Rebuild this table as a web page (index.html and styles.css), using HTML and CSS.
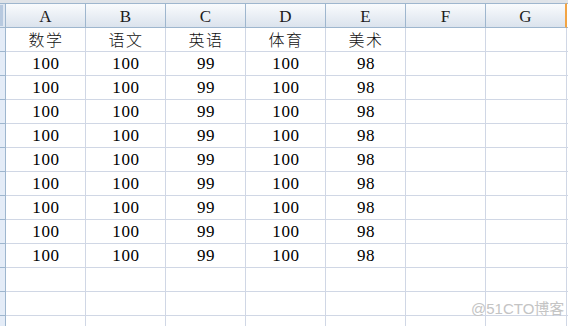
FILE: index.html
```html
<!DOCTYPE html>
<html>
<head>
<meta charset="utf-8">
<link rel="stylesheet" href="styles.css">
</head>
<body>
<div class="sheet">
  <div class="topbar"></div>
  <div class="grid">
    <div class="corner"><span class="corner-mark"></span></div>
    <div class="h">A</div><div class="h">B</div><div class="h">C</div><div class="h">D</div><div class="h">E</div><div class="h">F</div><div class="h last">G</div><div class="h rest"></div>

    <div class="rh"></div><div class="c zh">数学</div><div class="c zh">语文</div><div class="c zh">英语</div><div class="c zh">体育</div><div class="c zh">美术</div><div class="c"></div><div class="c"></div><div class="c rest"></div>

    <div class="rh"></div><div class="c">100</div><div class="c">100</div><div class="c">99</div><div class="c">100</div><div class="c">98</div><div class="c"></div><div class="c"></div><div class="c rest"></div>
    <div class="rh"></div><div class="c">100</div><div class="c">100</div><div class="c">99</div><div class="c">100</div><div class="c">98</div><div class="c"></div><div class="c"></div><div class="c rest"></div>
    <div class="rh"></div><div class="c">100</div><div class="c">100</div><div class="c">99</div><div class="c">100</div><div class="c">98</div><div class="c"></div><div class="c"></div><div class="c rest"></div>
    <div class="rh"></div><div class="c">100</div><div class="c">100</div><div class="c">99</div><div class="c">100</div><div class="c">98</div><div class="c"></div><div class="c"></div><div class="c rest"></div>
    <div class="rh"></div><div class="c">100</div><div class="c">100</div><div class="c">99</div><div class="c">100</div><div class="c">98</div><div class="c"></div><div class="c"></div><div class="c rest"></div>
    <div class="rh"></div><div class="c">100</div><div class="c">100</div><div class="c">99</div><div class="c">100</div><div class="c">98</div><div class="c"></div><div class="c"></div><div class="c rest"></div>
    <div class="rh"></div><div class="c">100</div><div class="c">100</div><div class="c">99</div><div class="c">100</div><div class="c">98</div><div class="c"></div><div class="c"></div><div class="c rest"></div>
    <div class="rh"></div><div class="c">100</div><div class="c">100</div><div class="c">99</div><div class="c">100</div><div class="c">98</div><div class="c"></div><div class="c"></div><div class="c rest"></div>
    <div class="rh"></div><div class="c">100</div><div class="c">100</div><div class="c">99</div><div class="c">100</div><div class="c">98</div><div class="c"></div><div class="c"></div><div class="c rest"></div>

    <div class="rh"></div><div class="c"></div><div class="c"></div><div class="c"></div><div class="c"></div><div class="c"></div><div class="c"></div><div class="c"></div><div class="c rest"></div>
    <div class="rh"></div><div class="c"></div><div class="c"></div><div class="c"></div><div class="c"></div><div class="c"></div><div class="c"></div><div class="c"></div><div class="c rest"></div>
    <div class="rh"></div><div class="c"></div><div class="c"></div><div class="c"></div><div class="c"></div><div class="c"></div><div class="c"></div><div class="c"></div><div class="c rest"></div>
  </div>
  <div class="watermark">@51CTO博客</div>
</div>
</body>
</html>
```
FILE: styles.css
```css
html, body {
  margin: 0;
  padding: 0;
  background: #ffffff;
}
.sheet {
  position: relative;
  width: 568px;
  height: 326px;
  overflow: hidden;
  font-family: "Liberation Serif", serif;
  color: #000;
}
.topbar {
  height: 3px;
  background: #dfe3e8;
}
.grid {
  display: grid;
  grid-template-columns: 6px repeat(6, 80px) 81px 1fr;
  grid-template-rows: 25px repeat(13, 24px);
}
.grid > div {
  box-sizing: border-box;
}
.corner {
  border-top: 1px solid #9eb6ce;
  border-right: 1px solid #9eb6ce;
  border-bottom: 1px solid #9eb6ce;
  background: #dfe7f1;
  padding: 1px 0 1px 0;
}
.corner-mark {
  display: block;
  width: 3px;
  height: 100%;
  background: #b7c9df;
}
.h {
  border-top: 1px solid #9eb6ce;
  border-right: 1px solid #9eb6ce;
  border-bottom: 1px solid #9eb6ce;
  background: linear-gradient(#f9fbfd, #dbe3ed);
  text-align: center;
  font-family: "Liberation Serif", serif;
  font-size: 17px;
  line-height: 22px;
  padding-top: 2px;
  color: #1c1c1c;
}
.h.last {
  border-right: 2px solid #f2a444;
}
.h.rest {
  background: #ffffff;
  border-right: 0;
}
.rh {
  background: #e4ecf7;
  border-right: 1px solid #9eb6ce;
  border-bottom: 1px solid #9eb6ce;
}
.c {
  border-right: 1px solid #d0d7e5;
  border-bottom: 1px solid #d0d7e5;
  text-align: center;
  font-family: "Liberation Serif", serif;
  font-size: 17px;
  line-height: 22px;
  padding-top: 1px;
  padding-left: 1px;
  letter-spacing: 0.6px;
}
.c.zh {
  font-family: "Noto Sans CJK SC", sans-serif;
  font-size: 16px;
  font-weight: 300;
  letter-spacing: 1.5px;
  padding-top: 0;
  color: #111;
}
.c.rest {
  border-right: 0;
}
.watermark {
  position: absolute;
  left: 471px;
  top: 300px;
  font-family: "Liberation Sans", "Noto Sans CJK SC", sans-serif;
  font-size: 15px;
  line-height: 18px;
  color: #c4c4c4;
  white-space: nowrap;
}
```
